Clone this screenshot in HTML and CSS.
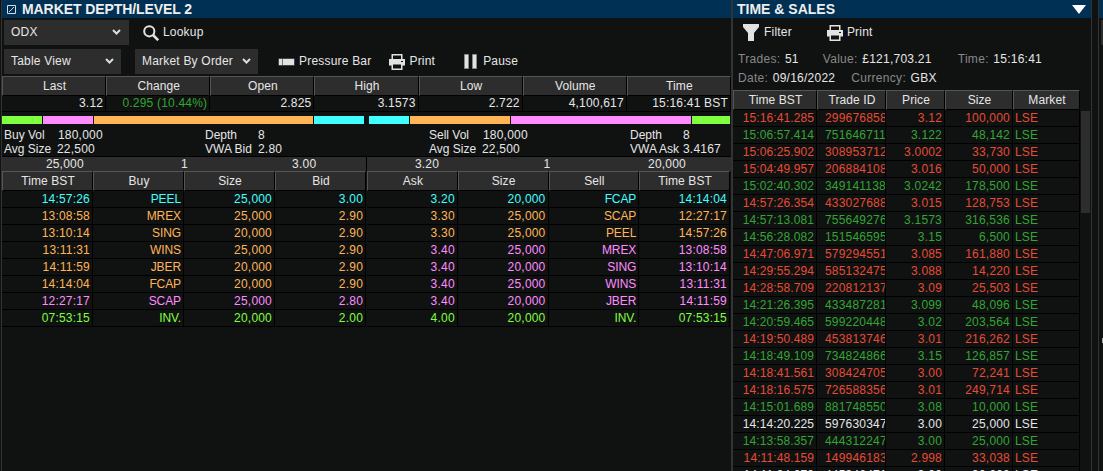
FILE: index.html
```html
<!DOCTYPE html>
<html lang="en">
<head>
<meta charset="UTF-8">
<title>Market Depth</title>
<link rel="stylesheet" href="styles.css">
</head>
<body>
	<div class="desk">
		<div class="panel depth">
			<div class="title">
				<svg class="link" width="9" height="9" viewBox="0 0 9 9"><path d="M.5 .5h8v8h-8zM2 7L7 2" fill="none" stroke="#d5dde2"/></svg>
				<h1>MARKET DEPTH/LEVEL 2</h1>
			</div>
			<div class="tools first">
				<div class="select symbol">ODX<svg width="9" height="6" viewBox="0 0 9 6"><path d="M1 1l3.5 3.5L8 1" fill="none" stroke="#ddd" stroke-width="2"/></svg></div>
				<div class="btn lookup"><svg width="16" height="16" viewBox="0 0 16 16"><circle cx="6.3" cy="6.3" r="5.1" fill="none" stroke="#e2e2e2" stroke-width="2"/><path d="M10 10l5.2 5.2" stroke="#e2e2e2" stroke-width="2.6"/></svg><span>Lookup</span></div>
			</div>
			<div class="tools second">
				<div class="select view">Table View<svg width="9" height="6" viewBox="0 0 9 6"><path d="M1 1l3.5 3.5L8 1" fill="none" stroke="#ddd" stroke-width="2"/></svg></div>
				<div class="select order">Market By Order<svg width="9" height="6" viewBox="0 0 9 6"><path d="M1 1l3.5 3.5L8 1" fill="none" stroke="#ddd" stroke-width="2"/></svg></div>
				<div class="btn pressure"><svg width="17" height="8" viewBox="0 0 17 8"><path d="M.5 .5h16v7H.5z" fill="#777"/><path d="M1 1h3v6H1zM5 1h11v6H5z" fill="#e2e2e2"/></svg><span>Pressure Bar</span></div>
				<div class="btn print"><svg width="16" height="16" viewBox="0 0 16 16"><path d="M0 5h2.5V0h11v5H16v6.5h-2.5V16h-11v-4.500H0z" fill="#e2e2e2"/><path d="M4 1.500h8V5H4zM4 10.500h8v4H4z" fill="#101212"/><path d="M12 7h2v1h-2z" fill="#101212"/></svg><span>Print</span></div>
				<div class="btn pause"><svg width="13" height="15" viewBox="0 0 13 15"><path d="M.5 .5h4v14h-4zM8.500 .5h4v14h-4z" fill="#e2e2e2" stroke="#888"/></svg><span>Pause</span></div>
			</div>
			<table class="stats">
				<thead><tr><th>Last</th><th>Change</th><th>Open</th><th>High</th><th>Low</th><th>Volume</th><th>Time</th></tr></thead>
				<tbody><tr><td>3.12</td><td class="up">0.295 (10.44%)</td><td>2.825</td><td>3.1573</td><td>2.722</td><td>4,100,617</td><td>15:16:41 BST</td></tr></tbody>
			</table>
			<div class="bars">
				<div class="bar buy"><i class="green"></i><i class="pink"></i><i class="orange"></i><i class="cyan"></i></div>
				<div class="bar sell"><i class="cyan"></i><i class="orange"></i><i class="pink"></i><i class="green"></i></div>
			</div>
			<div class="totals">
				<div class="total"><span>Buy Vol</span><b>180,000</b><span>Depth</span><b>8</b><span>Avg Size</span><b class="low">22,500</b><span>VWA Bid</span><b>2.80</b></div>
				<div class="total sell"><span>Sell Vol</span><b>180,000</b><span>Depth</span><b>8</b><span>Avg Size</span><b class="low">22,500</b><span>VWA Ask</span><b>3.4167</b></div>
			</div>
			<div class="best">
				<div class="bid"><span>25,000</span><span>1</span><span>3.00</span></div>
				<div class="ask"><span>3.20</span><span>1</span><span>20,000</span></div>
			</div>
			<div class="books">
				<table class="book bid">
					<thead><tr><th>Time BST</th><th>Buy</th><th>Size</th><th>Bid</th></tr></thead>
					<tbody id="bids"></tbody>
				</table>
				<table class="book ask">
					<thead><tr><th>Ask</th><th>Size</th><th>Sell</th><th>Time BST</th></tr></thead>
					<tbody id="asks"></tbody>
				</table>
			</div>
		</div>
		<div class="panel sales">
			<div class="title">
				<h1>TIME &amp; SALES</h1>
				<svg class="menu" width="14" height="9" viewBox="0 0 14 9"><path d="M0 0h14L7 9z" fill="#fff"/></svg>
			</div>
			<div class="tools first">
				<div class="btn filter"><svg width="16" height="17" viewBox="0 0 16 17"><path d="M0 0h16v3l-5 6v8H5V9L0 3z" fill="#e2e2e2"/></svg><span>Filter</span></div>
				<div class="btn print"><svg width="16" height="16" viewBox="0 0 16 16"><path d="M0 5h2.500V0h11v5H16v6.500h-2.500V16h-11v-4.500H0z" fill="#e2e2e2"/><path d="M4 1.500h8V5H4zM4 10.500h8v4H4z" fill="#101212"/><path d="M12 7h2v1h-2z" fill="#101212"/></svg><span>Print</span></div>
			</div>
			<div class="info">
				<p><span>Trades:</span> <b>51</b><span class="value">Value:</span> <b>£121,703.21</b><span class="time">Time:</span> <b>15:16:41</b></p>
				<p><span>Date:</span> <b>09/16/2022</b><span class="cur">Currency:</span> <b>GBX</b></p>
			</div>
			<div class="list">
				<table class="trades">
					<thead><tr><th>Time BST</th><th>Trade ID</th><th>Price</th><th>Size</th><th>Market</th></tr></thead>
					<tbody id="trades"></tbody>
				</table>
				<div class="scroll"></div>
			</div>
		</div>
		<div class="panel next">
			<div class="title"></div>
			<div class="box"></div>
			<div class="mark"></div>
		</div>
	</div>
<script src="data.js"></script>
</body>
</html>
```
FILE: styles.css
```css
* { padding: 0; margin: 0; box-sizing: border-box; }
body { background: #101212; color: #e6e6e6; font: 12px/14px "Liberation Sans", Arial, sans-serif; letter-spacing: .2px; overflow: hidden; }
i, b { font-style: normal; font-weight: normal; }
table { border-spacing: 0; table-layout: fixed; }
svg { flex: none; }

.desk { display: flex; height: 471px; }
.panel { overflow: hidden; border-left: 1px solid #333; flex: none; }
.depth { width: 731px; margin-left: 1px; border-right: 1px solid #333; }
.sales { width: 360px; border-right: 1px solid #333; }
.next { width: 5px; margin-left: 6px; }

.title { display: flex; align-items: center; height: 18px; background: #003053; }
.title h1 { font-size: 14px; line-height: 16px; font-weight: bold; letter-spacing: -.08px; color: #eee; }
.title .link { margin: 0 6px 0 5px; }
.title .menu { margin: 0 5px 0 auto; }
.sales h1 { margin-left: 4px; letter-spacing: 0; }

.tools { display: flex; align-items: center; }
.select { display: flex; align-items: center; justify-content: space-between; height: 25px; background: #2d2d2d; padding: 0 7px 1px; }
.symbol { width: 125px; margin-left: 2px; padding-right: 8px; }
.view { width: 117px; margin-left: 2px; }
.order { width: 123px; margin-left: 14px; }
.btn { display: flex; align-items: center; height: 25px; }
.btn span { margin-bottom: 2px; }
.first { align-items: flex-start; padding-top: 2px; height: 29px; }
.second { height: 25px; margin-top: 2px; }
.lookup { margin-left: 14px; }
.lookup span { margin-left: 4px; }
.pressure { margin-left: 20px; }
.pressure span { margin-left: 4px; }
.print { margin-left: 18px; }
.print span { margin-left: 4px; }
.pause { margin-left: 29px; }
.pause span { margin-left: 6px; }

th { height: 20px; background: #2d2d2d; border-top: 1px solid #555; border-left: 1px solid #555; border-right: 1px solid #000; border-bottom: 1px solid #000; font-weight: normal; text-align: center; letter-spacing: .1px; padding-left: 1px; overflow: hidden; }
td { height: 17px; line-height: 15px; border-right: 1px solid #000; border-bottom: 1px solid #000; text-align: right; padding: 0 2px 0 0; overflow: hidden; white-space: nowrap; }

.stats { width: 729px; margin-top: 2px; }
.stats td { height: 16px; }
.stats .up { color: #33a532; }

.bars { display: flex; gap: 5px; height: 8px; margin-top: 4px; }
.bar { display: flex; gap: 1px; }
.bar.buy { width: 362px; }
.bar.sell { width: 361px; }
.bar i { flex: none; }
.bar .green { width: 40px; background: #80ff40; }
.bar .cyan { width: 50px; background: #40ffff; }
.bar .pink { width: 50px; background: #ff8cff; }
.bar .orange { flex: 1; background: #ffb557; }
.sell .green { width: 38px; }
.sell .cyan { width: 40px; }
.sell .orange { flex: none; width: 100px; }
.sell .pink { flex: 1; }

.totals { display: flex; height: 32px; padding-top: 4px; }
.total { display: grid; grid-template-columns: 54px 147px 53px auto; grid-auto-rows: 14px; width: 425px; padding-left: 2px; }
.total span { letter-spacing: 0; }
.total b.low { margin-left: -1px; }
.total.sell { width: 304px; }

.best { display: flex; gap: 1px; height: 15px; background: #000; border-top: 1px solid #000; }
.best div { display: flex; align-items: center; background: #2d2d2d; width: 364px; }
.best span { flex: 1; text-align: center; }
.best .bid { padding: 0 2px; }
.best .bid span:first-child { padding-left: 1px; }
.best .ask span:last-child { padding-right: 4px; }

.books { display: flex; gap: 1px; }
.book { width: 364px; }
.book.ask { width: 363px; }
.bid td:nth-child(2), .ask td:nth-child(3) { letter-spacing: -.1px; }
.book .cyan { color: #40ffff; }
.book .orange { color: #ffb557; }
.book .pink { color: #ff8cff; }
.book .green { color: #80ff40; }

.info { height: 43px; padding: 4px 0 0 5px; }
.info p { height: 19px; line-height: 17px; white-space: pre; }
.info span { color: #888; letter-spacing: .3px; }
.info b { margin-left: 1px; letter-spacing: .25px; }
.info .value { margin-left: 24px; }
.info .time { margin-left: 26px; }
.info .cur { margin-left: 16px; }

.sales .filter { margin-left: 10px; }
.sales .filter span { margin-left: 5px; }
.sales .print { margin-left: 35px; }
.list { display: flex; height: 381px; overflow: hidden; align-items: flex-start; }
.trades { width: 347px; flex: none; }
.trades th:nth-child(1) { width: 84px; }
.trades th:nth-child(2) { width: 69px; }
.trades th:nth-child(3) { width: 59px; }
.trades th:nth-child(4) { width: 68px; }
.trades td:nth-child(1) { letter-spacing: .1px; }
.trades td:nth-child(2) { text-align: left; padding: 0 0 0 8px; }
.trades td:nth-child(5) { text-align: left; padding-left: 2px; }
.trades .dn { color: #e64b35; }
.trades .up { color: #33a532; }
.scroll { width: 9px; height: 102px; margin: 21px 0 0 1px; background: #2d2d2d; }

.next .box { height: 25px; margin: 2px 0 0 2px; background: #2d2d2d; }
.next .mark { width: 2px; height: 5px; margin: 293px 0 0 3px; background: #aaa; }
```
FILE: data.js
```js
var bids = [
	['cyan', '14:57:26', 'PEEL', '25,000', '3.00'],
	['orange', '13:08:58', 'MREX', '25,000', '2.90'],
	['orange', '13:10:14', 'SING', '20,000', '2.90'],
	['orange', '13:11:31', 'WINS', '25,000', '2.90'],
	['orange', '14:11:59', 'JBER', '20,000', '2.90'],
	['orange', '14:14:04', 'FCAP', '20,000', '2.90'],
	['pink', '12:27:17', 'SCAP', '25,000', '2.80'],
	['green', '07:53:15', 'INV.', '20,000', '2.00']
];

var asks = [
	['cyan', '3.20', '20,000', 'FCAP', '14:14:04'],
	['orange', '3.30', '25,000', 'SCAP', '12:27:17'],
	['orange', '3.30', '25,000', 'PEEL', '14:57:26'],
	['pink', '3.40', '25,000', 'MREX', '13:08:58'],
	['pink', '3.40', '20,000', 'SING', '13:10:14'],
	['pink', '3.40', '25,000', 'WINS', '13:11:31'],
	['pink', '3.40', '20,000', 'JBER', '14:11:59'],
	['green', '4.00', '20,000', 'INV.', '07:53:15']
];

var trades = [
	['dn', '15:16:41.285', '299676858', '3.12', '100,000'],
	['up', '15:06:57.414', '751646711', '3.122', '48,142'],
	['dn', '15:06:25.902', '308953712', '3.0002', '33,730'],
	['dn', '15:04:49.957', '206884108', '3.016', '50,000'],
	['up', '15:02:40.302', '349141138', '3.0242', '178,500'],
	['dn', '14:57:26.354', '433027688', '3.015', '128,753'],
	['up', '14:57:13.081', '755649276', '3.1573', '316,536'],
	['up', '14:56:28.082', '151546595', '3.15', '6,500'],
	['dn', '14:47:06.971', '579294551', '3.085', '161,880'],
	['dn', '14:29:55.294', '585132475', '3.088', '14,220'],
	['dn', '14:28:58.709', '220812137', '3.09', '25,503'],
	['up', '14:21:26.395', '433487281', '3.099', '48,096'],
	['up', '14:20:59.465', '599220448', '3.02', '203,564'],
	['dn', '14:19:50.489', '453813746', '3.01', '216,262'],
	['up', '14:18:49.109', '734824866', '3.15', '126,857'],
	['dn', '14:18:41.561', '308424705', '3.00', '72,241'],
	['dn', '14:18:16.575', '726588356', '3.01', '249,714'],
	['up', '14:15:01.689', '881748550', '3.08', '10,000'],
	['', '14:14:20.225', '597630347', '3.00', '25,000'],
	['up', '14:13:58.357', '444312247', '3.00', '25,000'],
	['dn', '14:11:48.159', '149946183', '2.998', '33,038'],
	['', '14:11:04.070', '445346471', '3.00', '30,000']
];

function fill(id, rows, tail){
	var html = '';
	for (var i = 0; i < rows.length; i++) {
		html += '<tr class="' + rows[i][0] + '"><td>' + rows[i].slice(1).concat(tail).join('</td><td>') + '</td></tr>';
	}
	document.getElementById(id).innerHTML = html;
}

fill('bids', bids, []);
fill('asks', asks, []);
fill('trades', trades, ['LSE']);
```
